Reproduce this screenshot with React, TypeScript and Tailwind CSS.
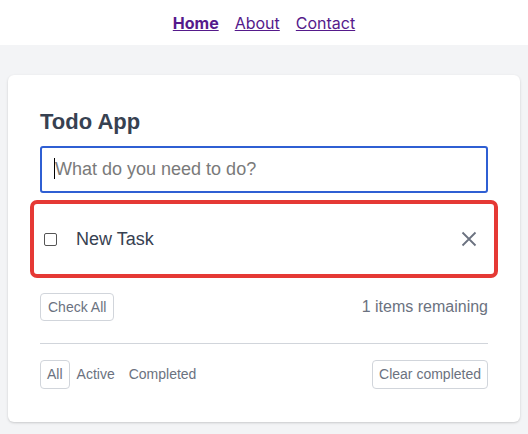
import React from "react";

export default function App() {
  return (
    <div className="min-h-[434px] w-[528px] bg-[#f3f4f6] font-['Liberation_Sans',Arial,sans-serif]">
      <nav className="flex h-[45px] items-center justify-center gap-4 bg-white font-['Inter',sans-serif] text-[16px] text-[#551a8b]">
        <a className="font-bold underline" href="#">Home</a>
        <a className="underline" href="#">About</a>
        <a className="underline" href="#">Contact</a>
      </nav>
      <div className="pt-[30px] pb-[12px]">
        <div className="mx-[8px] rounded-[6px] bg-white px-[32px] pt-[33px] pb-[33px] shadow-[0_1px_3px_rgba(0,0,0,0.12),0_1px_2px_rgba(0,0,0,0.06)]">
          <h1 className="text-[22px] font-bold leading-[28px] text-[#374151]">Todo App</h1>
          <div className="mt-[10px] flex h-[47px] items-center rounded-[3px] border-2 border-[#2f5fd3] pl-[13px]">
            <span className="relative text-[18px] text-[#7a7a7a]">
              <span className="absolute left-[-1px] top-[2px] h-[21px] w-px bg-black" />
              What do you need to do?
            </span>
          </div>
          <div className="mx-[-10px] mt-[7px] flex h-[78px] items-center rounded-[7px] border-4 border-[#e53935] pl-[10px] pr-[17px]">
            <span className="mt-[1px] h-[13px] w-[13px] rounded-[2px] border border-[#555]" />
            <span className="ml-[19px] flex-1 text-[18px] text-[#374151]">New Task</span>
            <svg width="16" height="16" viewBox="0 0 16 16" className="text-[#6b7280]">
              <path d="M1.5 1.5 L14.5 14.5 M14.5 1.5 L1.5 14.5" stroke="currentColor" strokeWidth="1.8" fill="none" />
            </svg>
          </div>
          <div className="mt-[15px] flex items-center justify-between">
            <button className="rounded-[4px] border border-[#d1d5db] px-[7px] py-[3px] text-[14px] leading-[20px] text-[#6b7280]">Check All</button>
            <span className="text-[16px] text-[#6b7280]">1 items remaining</span>
          </div>
          <div className="mt-[22px] h-px bg-[#d1d5db]" />
          <div className="mt-[16px] flex items-center justify-between">
            <div className="flex">
              <button className="rounded-[4px] border border-[#d1d5db] px-[6px] py-[3px] text-[14px] leading-[21px] text-[#6b7280]">All</button>
              <button className="rounded-[4px] border border-transparent px-[6px] py-[3px] text-[14px] leading-[21px] text-[#6b7280]">Active</button>
              <button className="rounded-[4px] border border-transparent px-[6px] py-[3px] text-[14px] leading-[21px] text-[#6b7280]">Completed</button>
            </div>
            <button className="rounded-[4px] border border-[#d1d5db] px-[6px] py-[3px] text-[14px] leading-[21px] text-[#6b7280]">Clear completed</button>
          </div>
        </div>
      </div>
    </div>
  );
}
